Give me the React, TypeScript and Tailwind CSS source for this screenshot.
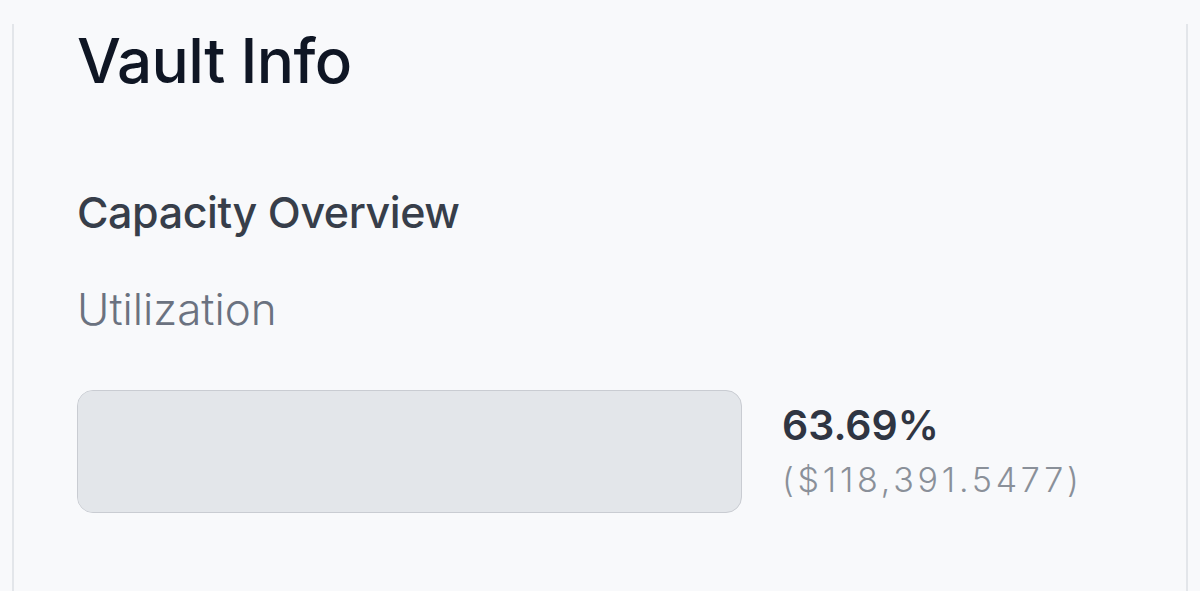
export default function App() {
  const utilization = 63.69;
  return (
    <div
      className="min-h-[591px] w-full bg-[#f8f9fb] pt-6 px-3"
      style={{ fontFamily: 'Inter, "Noto Sans", sans-serif' }}
    >
      <div className="h-[567px] border-x-2 border-[#e3e6ea] pl-[63px] pr-10">
        <h1 className="text-[62px] leading-none font-medium text-[#0f1624] tracking-[-0.01em] pt-[6px]">
          Vault Info
        </h1>
        <h2 className="mt-[99px] text-[43px] leading-none font-medium text-[#373e4a] tracking-[-0.01em]">
          Capacity Overview
        </h2>
        <div className="mt-[53px] text-[44px] leading-none font-light text-[#6b7280]">
          Utilization
        </div>
        <div className="mt-[59px] flex items-start gap-10">
          <div className="h-[123px] w-[665px] shrink-0 rounded-[16px] border border-[#c9ccd2] bg-[#e3e6ea] overflow-hidden">
            <div className="h-full bg-[#e3e6ea]" style={{ width: `${utilization}%` }} />
          </div>
          <div className="flex flex-col pt-[11px]">
            <span className="text-[41px] leading-[48px] font-semibold text-[#2f3542]">63.69%</span>
            <span className="mt-[7px] text-[34px] leading-[48px] font-light text-[#8a9099] tracking-[0.11em]">
              ($118,391.5477)
            </span>
          </div>
        </div>
      </div>
    </div>
  );
}
